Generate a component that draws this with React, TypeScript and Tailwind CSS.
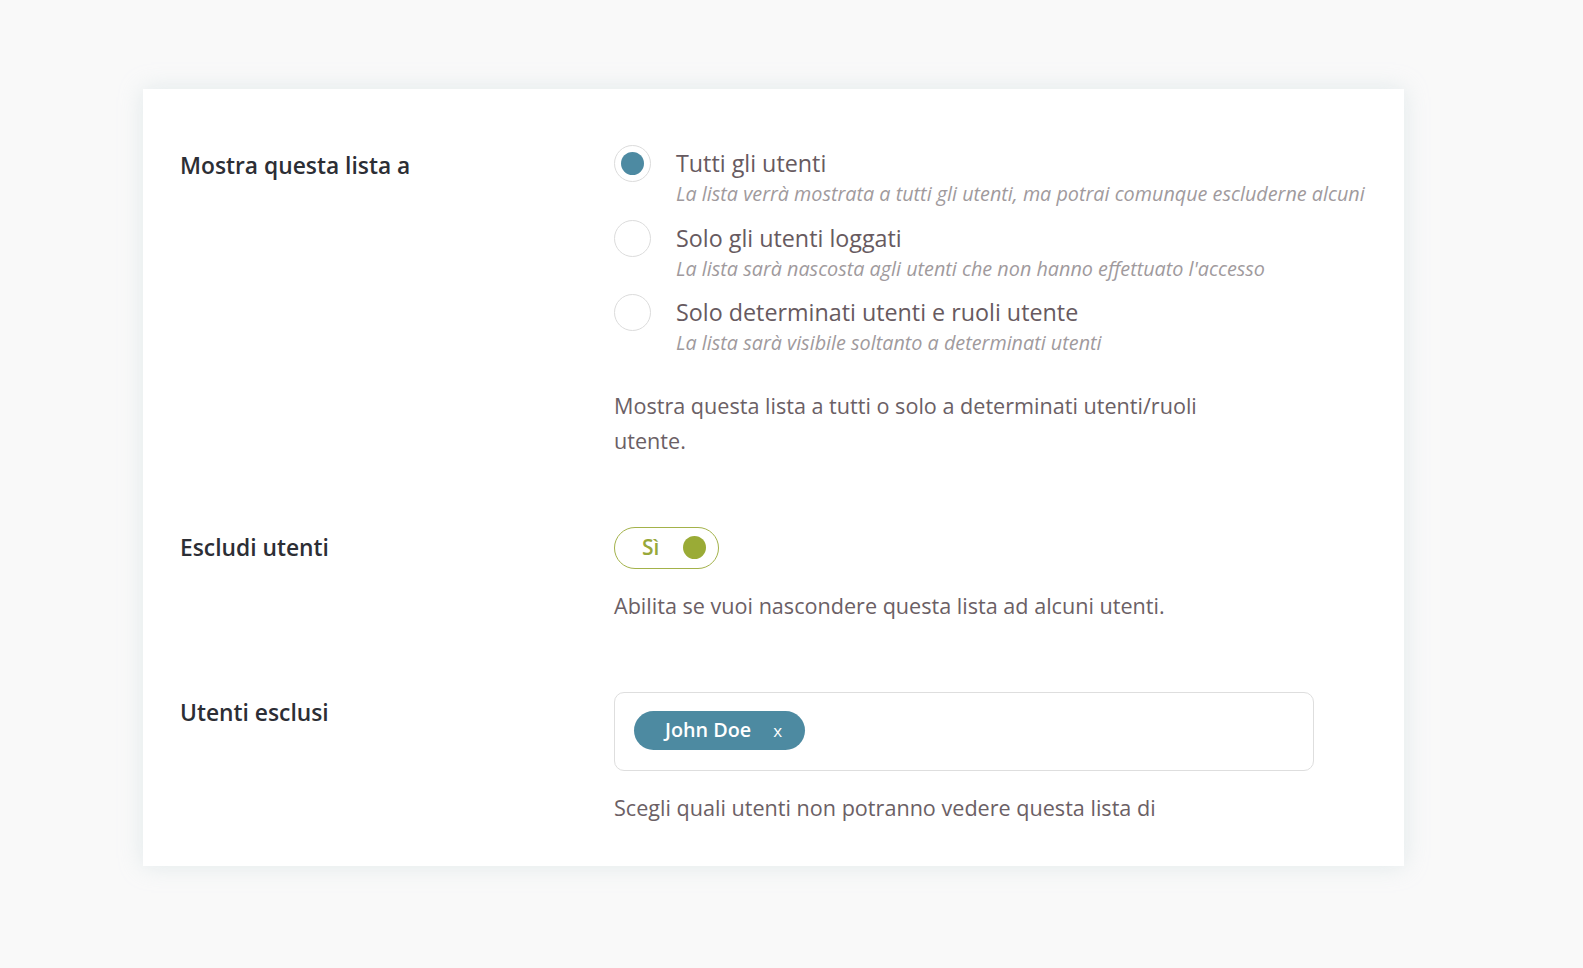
export default function App() {
  const options = [
    {
      title: "Tutti gli utenti",
      sub: "La lista verrà mostrata a tutti gli utenti, ma potrai comunque escluderne alcuni",
      selected: true,
    },
    {
      title: "Solo gli utenti loggati",
      sub: "La lista sarà nascosta agli utenti che non hanno effettuato l'accesso",
      selected: false,
    },
    {
      title: "Solo determinati utenti e ruoli utente",
      sub: "La lista sarà visibile soltanto a determinati utenti",
      selected: false,
    },
  ];

  const label = "pt-[5px] text-[22.8px] leading-[31px] font-semibold text-[#2c2e35]";
  const help = "text-[21.6px] leading-[35px] text-[#6b6065]";

  return (
    <div className="min-h-screen bg-[#f9f9f9] pt-[89px] pl-[143px] pb-[102px] font-['Open_Sans',sans-serif]">
      <div className="w-[1261px] bg-white shadow-[0_0_22px_rgba(190,210,215,0.4)] pt-[56px] pb-[41px] pl-[37px] flex flex-col gap-[68.5px]">
        {/* Row 1 */}
        <div className="grid grid-cols-[434px_1fr]">
          <div className={label}>Mostra questa lista a</div>
          <div className="flex flex-col">
            <div className="flex flex-col gap-[11.5px]">
              {options.map((o) => (
                <div key={o.title} className="flex items-start">
                  <div className="w-[37px] h-[37px] shrink-0 rounded-full border border-[#dcdcdc] flex items-center justify-center">
                    {o.selected && <div className="w-[23px] h-[23px] rounded-full bg-[#4d8aa2]" />}
                  </div>
                  <div className="ml-[25px] mt-[2px] flex flex-col">
                    <div className="text-[23.3px] leading-[33px] text-[#675a60]">{o.title}</div>
                    <div className="italic text-[19.8px] leading-[28px] text-[#a09a9d]">{o.sub}</div>
                  </div>
                </div>
              ))}
            </div>
            <div className={`mt-[31px] w-[600px] ${help}`}>
              Mostra questa lista a tutti o solo a determinati utenti/ruoli utente.
            </div>
          </div>
        </div>

        {/* Row 2 */}
        <div className="grid grid-cols-[434px_1fr]">
          <div className={label}>Escludi utenti</div>
          <div className="flex flex-col">
            <div className="w-[105px] h-[42px] rounded-full border border-[#a3b24a] flex items-center justify-between pl-[27px] pr-[12px]">
              <span className="text-[21px] leading-none font-semibold text-[#98a83a]">Sì</span>
              <span className="w-[23px] h-[23px] rounded-full bg-[#9aab36]" />
            </div>
            <div className={`mt-[19.5px] ${help}`}>Abilita se vuoi nascondere questa lista ad alcuni utenti.</div>
          </div>
        </div>

        {/* Row 3 */}
        <div className="grid grid-cols-[434px_1fr]">
          <div className={label}>Utenti esclusi</div>
          <div className="flex flex-col">
            <div className="w-[700px] h-[79px] rounded-[10px] border border-[#dedede] flex items-center pl-[19px] pb-[2px]">
              <div className="h-[39px] w-[171px] rounded-full bg-[#4d8aa1] text-white flex items-center pl-[31px]">
                <span className="text-[19.8px] font-semibold leading-none">John Doe</span>
                <span className="ml-[22px] text-[17px] leading-none">x</span>
              </div>
            </div>
            <div className={`mt-[19px] ${help}`}>Scegli quali utenti non potranno vedere questa lista di</div>
          </div>
        </div>
      </div>
    </div>
  );
}
